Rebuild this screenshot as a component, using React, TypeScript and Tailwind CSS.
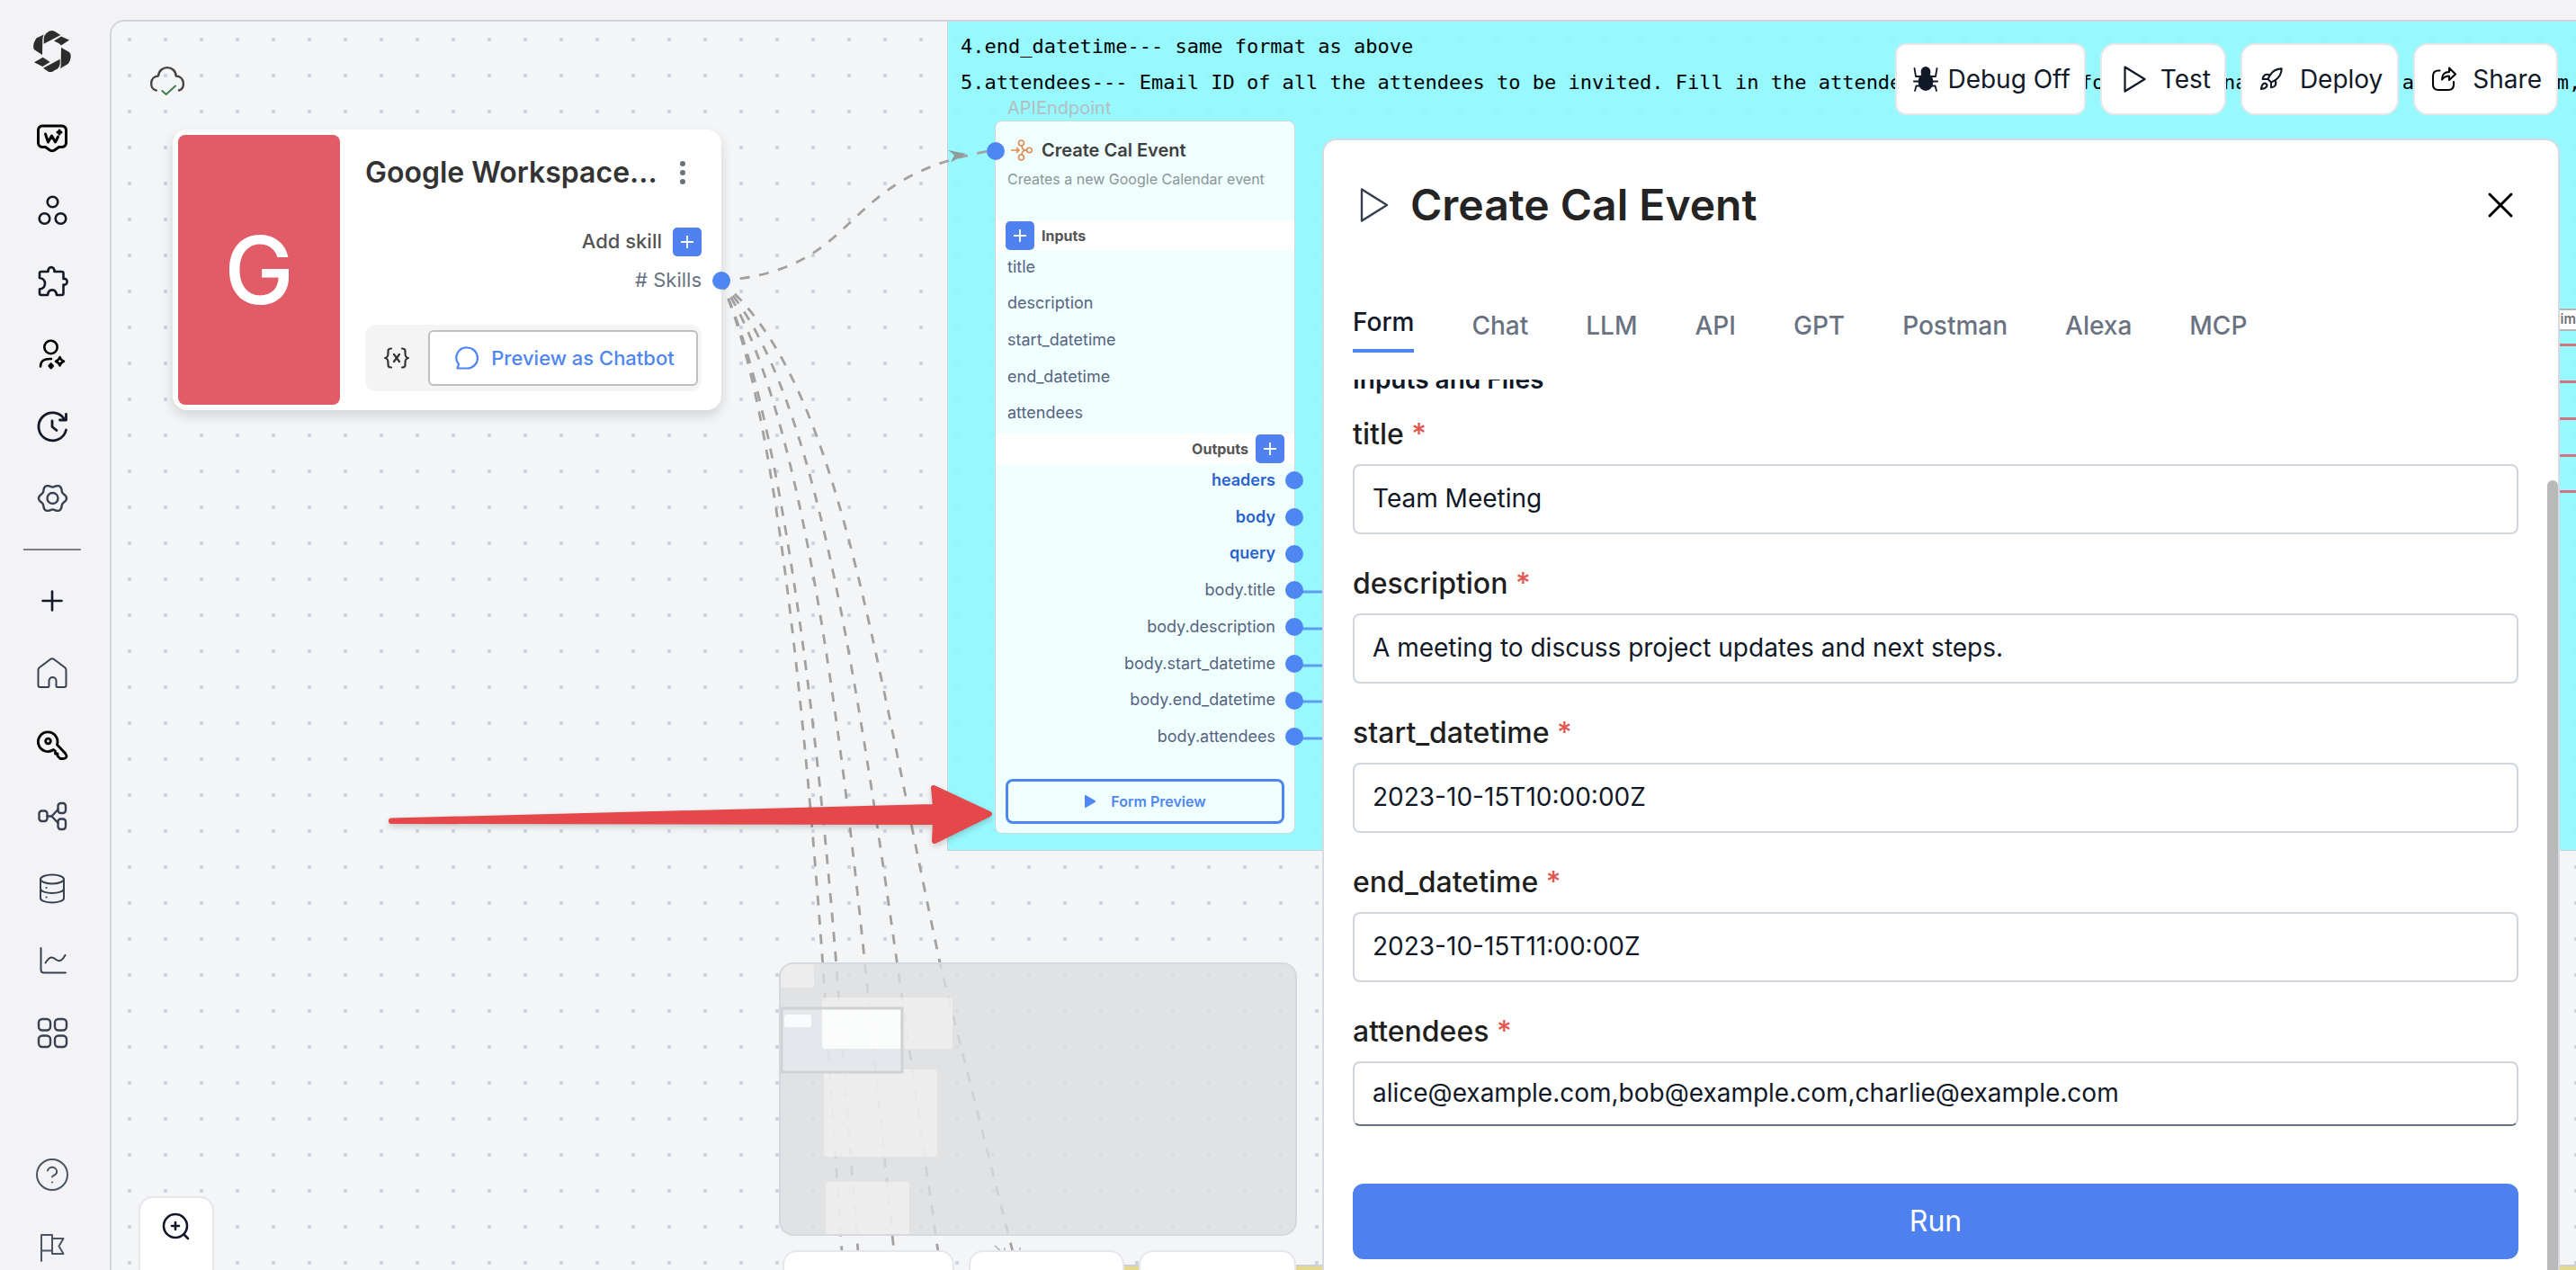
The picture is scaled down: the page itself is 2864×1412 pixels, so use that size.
import { useState } from 'react';
import type { ReactNode } from 'react';
import { Rocket, X } from 'lucide-react';

interface IconProps {
  color?: string;
  width?: number;
  children: ReactNode;
}

function Icon({ color = '#374151', width = 2, children }: IconProps) {
  return (
    <svg
      viewBox="0 0 40 40"
      className="size-10"
      fill="none"
      stroke={color}
      strokeWidth={width}
      strokeLinecap="round"
      strokeLinejoin="round"
      aria-hidden="true"
    >
      {children}
    </svg>
  );
}

// six-lobed gear outline
const gearPath =
  Array.from({ length: 72 }, (_, i) => {
    const a = (i * Math.PI) / 36;
    const r = 14 + 1.5 * Math.cos(6 * a);
    return `${i === 0 ? 'M' : 'L'}${(20.5 + r * Math.cos(a)).toFixed(2)} ${(20 + r * Math.sin(a)).toFixed(2)}`;
  }).join('') + 'Z';

const mainNav = [
  {
    label: 'Assistant',
    icon: (
      <Icon color="#000" width={3}>
        <path d="M9 6H31a4.500 4.500 0 0 1 4.500 4.500V25a4.500 4.500 0 0 1-4.500 4.500h-3.500l-5 3.500q-2.500 1.500-5 0l-5-3.500H9A4.500 4.500 0 0 1 4.500 25V10.500A4.500 4.500 0 0 1 9 6z" />
        <path d="M12.500 15l3 9 4-7 4 7 3-6" />
        <path d="M28 11v4M26 13h4" width={2} />
      </Icon>
    ),
  },
  {
    label: 'Teams',
    icon: (
      <Icon color="#111827" width={2.6}>
        <circle cx="20.500" cy="10.500" r="5.800" />
        <circle cx="11.500" cy="29" r="5.800" />
        <circle cx="29.500" cy="29" r="5.800" />
      </Icon>
    ),
  },
  {
    label: 'Plugins',
    icon: (
      <Icon color="#111827" width={2.6}>
        <path d="M8 8h7.500c-.5-6.500 7.500-6.500 7 0h8q2 0 2 2v6c5.500-1.500 5.500 8 0 6.500V32q0 2-2 2h-5.500c-1-7.500-9-7.500-10 0H8q-2 0-2-2v-4.500c8-.5 8-12 0-12.500V10q0-2 2-2z" />
      </Icon>
    ),
  },
  {
    label: 'Personas',
    icon: (
      <Icon color="#000" width={2.6}>
        <circle cx="18.500" cy="12" r="7.200" />
        <path d="M7 33.500c0-6 4-9 12-8.500" />
        <path d="M28.500 23q1 3.500 4.500 4.700-3.500 1.200-4.500 4.700-1-3.500-4.500-4.700 3.500-1.200 4.500-4.700z" />
        <path d="M18.700 30.500l2 2.300-2 2.300-2-2.300z" fill="#000" />
      </Icon>
    ),
  },
  {
    label: 'History',
    icon: (
      <Icon color="#111827" width={2.8}>
        <path d="M35.500 24a15.500 15.500 0 1 1-2-12" />
        <path d="M35.500 6.500v6.500h-7" />
        <path d="M20 14v6.500l5 4" />
      </Icon>
    ),
  },
  {
    label: 'Settings',
    icon: (
      <Icon width={2.4}>
        <path d={gearPath} />
        <circle cx="20.500" cy="20" r="6" />
      </Icon>
    ),
  },
];

const toolNav = [
  {
    label: 'Add',
    icon: (
      <Icon color="#111827" width={2.6}>
        <path d="M20 9.500v21M9.500 20h21" />
      </Icon>
    ),
  },
  {
    label: 'Home',
    icon: (
      <Icon>
        <path d="M4.500 34V17q0-2 1.500-3L18 5q2-1.300 4 0l12 9q1.500 1 1.500 3v17q0 2-2 2H26q-1.500 0-1.500-1.500V29a4 4 0 0 0-8 0v5.500Q16.500 36 15 36H6.500q-2 0-2-2z" />
      </Icon>
    ),
  },
  {
    label: 'Keys',
    icon: (
      <Icon color="#000" width={2.8}>
        <path d="M21.500 25.500a10.800 10.800 0 1 1 4-5.500l9 9.500q3.500 5-1.500 6h-4l-3-3v-2.500h-2.500V27z" />
        <circle cx="15.500" cy="16" r="2.800" />
      </Icon>
    ),
  },
  {
    label: 'Flows',
    icon: (
      <Icon width={2.4}>
        <rect x="5.500" y="13.500" width="9" height="11.500" rx="3" />
        <rect x="26.500" y="5" width="8.500" height="11" rx="3" />
        <rect x="26.500" y="22.500" width="8.500" height="11.500" rx="3" />
        <path d="M14.500 19.500h5l7-7.500M19.500 19.500l7 7.500" />
      </Icon>
    ),
  },
  {
    label: 'Database',
    icon: (
      <Icon>
        <ellipse cx="20" cy="9.500" rx="13" ry="5" />
        <path d="M7 9.500v21c0 6.500 26 6.500 26 0v-21M7 20c0 6.500 26 6.500 26 0" />
        <path d="M13.500 19h.1M13.500 29.500h.1" />
      </Icon>
    ),
  },
  {
    label: 'Analytics',
    icon: (
      <Icon>
        <path d="M7.500 6v24q0 3.500 3.500 3.500h24" />
        <path d="M12.500 22.500c5-8 8-7 12-3.500 4 3 7 .5 10-5" />
      </Icon>
    ),
  },
  {
    label: 'Apps',
    icon: (
      <Icon width={2.4}>
        <rect x="5" y="5" width="13" height="12.500" rx="4" />
        <rect x="23" y="5" width="13" height="12.500" rx="4" />
        <rect x="5" y="23.500" width="13" height="12.500" rx="4" />
        <rect x="23" y="23.500" width="13" height="12.500" rx="4" />
      </Icon>
    ),
  },
];

const footNav = [
  {
    label: 'Help',
    icon: (
      <Icon color="#4b5563">
        <circle cx="20" cy="20" r="17" />
        <path d="M15 15.500a5.200 5.200 0 0 1 10.200 1.500c0 3.500-5.200 4-5.200 5.500M20 28.500h.1" />
      </Icon>
    ),
  },
  {
    label: 'Report',
    icon: (
      <Icon color="#4b5563">
        <path d="M8 36V7h12v17.500H8M20 11h12.500l-5 8.500 5 8.500H20v-4" />
      </Icon>
    ),
  },
];

const tabs = ['Form', 'Chat', 'LLM', 'API', 'GPT', 'Postman', 'Alexa', 'MCP'];

const fields = [
  { name: 'title', value: 'Team Meeting' },
  { name: 'description', value: 'A meeting to discuss project updates and next steps.' },
  { name: 'start_datetime', value: '2023-10-15T10:00:00Z' },
  { name: 'end_datetime', value: '2023-10-15T11:00:00Z' },
];

const nodeInputs = ['title', 'description', 'start_datetime', 'end_datetime', 'attendees'];

const nodeOutputs = [
  { name: 'headers', root: true },
  { name: 'body', root: true },
  { name: 'query', root: true },
  { name: 'body.title', root: false },
  { name: 'body.description', root: false },
  { name: 'body.start_datetime', root: false },
  { name: 'body.end_datetime', root: false },
  { name: 'body.attendees', root: false },
];

function NavButton({ label, icon }: { label: string; icon: ReactNode }) {
  return (
    <button type="button" aria-label={label} className="flex h-20 w-full shrink-0 items-center justify-center pr-1.5">
      {icon}
    </button>
  );
}

function Sidebar() {
  return (
    <nav className="flex w-[122px] shrink-0 flex-col overflow-hidden pt-[34px]">
      <a href="/" aria-label="Dashboard" className="mb-[34px] flex shrink-0 justify-center pr-1.5">
        <svg viewBox="0 0 42 46" className="h-[46px] w-[42px]" fill="#2d2d2d">
          <path d="M10 27.100L.8 21Q-.5 17 .8 13.500 2 10 3.700 8.200L11.700 4.600Q10.300 7 10.300 10.100z" />
          <path d="M11.700 14.700V9.200Q12 5 14.700 2.700L18 .5Q21-.5 24 .9L30.300 5z" />
          <path d="M23 11.500L31 6.400 40 10.500 31 16.500 29 14.500z" />
          <path d="M31 18.800L40.300 24.300Q42 26 41.700 28.500 41.500 34 38 37.600L29.700 42.200Q31 40 30.700 37.200z" />
          <path d="M29.700 31.700V36.700Q29.500 40 27 42.200L20.700 46H17.300L11 41.800z" />
          <path d="M1 35.300L10.700 29.800 18.700 34.900 10.300 39.900z" />
        </svg>
      </a>
      {mainNav.map((item) => (
        <NavButton key={item.label} {...item} />
      ))}
      <hr className="my-4 ml-[26px] h-0.5 w-16 shrink-0 border-0 bg-[#7d7d82]" />
      {toolNav.map((item) => (
        <NavButton key={item.label} {...item} />
      ))}
      <div className="mt-[78px]">
        {footNav.map((item) => (
          <NavButton key={item.label} {...item} />
        ))}
      </div>
    </nav>
  );
}

function PlusButton({ label }: { label: string }) {
  return (
    <button
      type="button"
      aria-label={label}
      className="flex size-8 shrink-0 items-center justify-center rounded-[5px] bg-[#4f82ee]"
    >
      <svg viewBox="0 0 14 14" className="size-3.5" stroke="#fff" strokeWidth="1.800">
        <path d="M7 0v14M0 7h14" />
      </svg>
    </button>
  );
}

const edges = [
  'M801 312C852 420 888 700 915 1075L936 1392',
  'M801 312C854 420 900 700 930 1075L954 1392',
  'M801 312C876 420 924 700 962 1075L994 1392',
  'M801 312C900 420 945 700 998 1075L1043 1392',
  'M801 312C930 420 966 700 1046 1075L1126 1392',
  'M801 312C965 300 925 195 1106 167',
];

function Edges() {
  return (
    <svg className="absolute inset-0 size-full" fill="none" aria-hidden="true">
      <g transform="translate(-124 -24)">
        {edges.map((d) => (
          <path key={d} d={d} stroke="#a1a1a1" strokeWidth="2.800" strokeDasharray="11 10.700" />
        ))}
        <path d="M1054 167l20 4-17 9.500 4-8z" fill="#909a9c" />
        <path d="M1106 1385l9 8M1117 1387v4M1134 1387v4" stroke="#b0b0b0" strokeWidth="1.500" />
        {[657, 698, 739, 779, 820].map((y) => (
          <path key={y} d={`M1439 ${y + 1}H1480`} stroke="#5f9bf0" strokeWidth="3" />
        ))}
        {[383, 424, 465, 506, 546].map((y) => (
          <path key={y} d={`M2830 ${y}.500H2870`} stroke="#cf7480" strokeWidth="3" />
        ))}
      </g>
    </svg>
  );
}

function AgentCard() {
  return (
    <section className="absolute left-[68px] top-[120px] flex h-[312px] w-[610px] rounded-2xl bg-white p-1.5 shadow-[0_6px_14px_rgba(0,0,0,0.14)]">
      <div className="flex w-[180px] shrink-0 items-center justify-center rounded-lg bg-[#e15c67] text-[104px] font-medium text-white">
        G
      </div>
      <div className="flex grow flex-col pl-7 pr-4">
        <div className="flex h-[84px] items-center justify-between pr-[18px]">
          <h2 className="text-[32px] font-semibold text-[#333]">Google Workspace...</h2>
          <button type="button" aria-label="More" className="flex flex-col gap-1">
            <i className="size-1.5 rounded-full bg-gray-500" />
            <i className="size-1.5 rounded-full bg-gray-500" />
            <i className="size-1.5 rounded-full bg-gray-500" />
          </button>
        </div>
        <div className="mt-[18px] flex items-center justify-end gap-3 text-[22px] font-medium text-[#555]">
          Add skill
          <PlusButton label="Add skill" />
        </div>
        <p className="mt-2.5 text-right text-[22px] leading-8 text-gray-500"># Skills</p>
        <div className="mt-[34px] flex h-[74px] items-center rounded-xl bg-[#f4f4f4] py-1.5 pr-1">
          <button type="button" aria-label="Variables" className="flex grow justify-center">
            <svg
              viewBox="0 0 28 24"
              className="h-6 w-7"
              fill="none"
              stroke="#333"
              strokeWidth="2.200"
              strokeLinecap="round"
            >
              <path d="M8 1.500c-4 0-3.500 2-3.500 5 0 3.500-.5 4.500-3 5.500 2.500 1 3 2 3 5.500 0 3-.5 5 3.500 5M20 1.500c4 0 3.500 2 3.500 5 0 3.500.5 4.500 3 5.500-2.500 1-3 2-3 5.500 0 3 .5 5-3.500 5M11 8l6 8M17 8l-6 8" />
            </svg>
          </button>
          <button
            type="button"
            className="flex h-[62px] w-[300px] items-center justify-center gap-3.5 rounded-md border-2 border-[#bfbfbf] bg-white pl-1 text-[22px] font-medium text-[#4f85f0]"
          >
            <svg viewBox="0 0 26 26" className="size-[26px]" fill="none" stroke="currentColor" strokeWidth="2.200" strokeLinejoin="round">
              <path d="M13.500 1.500a11.300 11.300 0 1 1 0 23H2.500l1.500-4.500A11.300 11.300 0 0 1 13.500 1.500z" />
            </svg>
            Preview as Chatbot
          </button>
        </div>
      </div>
      <span className="absolute -right-2.5 top-[158px] size-5 rounded-full bg-[#4f87f2]" />
    </section>
  );
}

function ApiNode() {
  return (
    <section className="absolute left-[982px] top-[82px] w-[334px]">
      <p className="pl-3.5 text-[20px] leading-7 text-[#b4bec1]">APIEndpoint</p>
      <div className="relative flex h-[793px] flex-col rounded-lg border border-[#cfd8db] bg-[#f0ffff]">
        <div className="h-[110px] shrink-0 px-[13px] pt-[18px]">
          <h3 className="flex items-center gap-2.5 pl-1 text-[20px] font-semibold leading-7 text-[#404040]">
            <svg viewBox="0 0 24 24" className="size-6" fill="none" stroke="#e08a4e" strokeWidth="1.600">
              <circle cx="11.500" cy="4" r="3" />
              <circle cx="11.500" cy="20" r="3" />
              <circle cx="20.500" cy="12" r="2.800" />
              <path d="M0 12h9M6 9l3 3-3 3M12 7c0 3 1.500 5 5.500 5M12 17c0-3 1.500-5 5.500-5" />
            </svg>
            Create Cal Event
          </h3>
          <p className="mt-1.5 text-[16px] leading-6 text-[#8a9596]">Creates a new Google Calendar event</p>
        </div>
        <div className="flex h-[34px] shrink-0 items-center gap-2 bg-white pl-[11px] text-[16px] font-bold text-[#555]">
          <PlusButton label="Add input" />
          Inputs
        </div>
        <ul className="flex h-[203px] shrink-0 flex-col pl-[13px] text-[18px] text-[#566380]">
          {nodeInputs.map((name) => (
            <li key={name} className="flex flex-1 items-center pb-1.5">
              {name}
            </li>
          ))}
        </ul>
        <div className="flex h-[34px] shrink-0 items-center justify-end gap-2 bg-white pr-[11px] text-[16px] font-bold text-[#555]">
          Outputs
          <PlusButton label="Add output" />
        </div>
        <ul className="flex h-[326px] shrink-0 flex-col text-[18px]">
          {nodeOutputs.map(({ name, root }) => (
            <li
              key={name}
              className={
                root
                  ? 'relative flex flex-1 items-center justify-end pb-1.5 pr-[21px] font-semibold text-[#2b62d0]'
                  : 'relative flex flex-1 items-center justify-end pb-1.5 pr-[21px] text-[#566380]'
              }
            >
              {name}
              <span className="absolute -right-2.5 top-2 size-5 rounded-full bg-[#4f87f2]" />
            </li>
          ))}
        </ul>
        <button
          type="button"
          className="mx-[11px] mt-6 flex h-[50px] shrink-0 items-center justify-center gap-4 rounded-lg border-[3px] border-[#4f87f2] text-[16px] font-semibold text-[#4f87f2]"
        >
          <svg viewBox="0 0 14 16" className="h-4 w-3.5" fill="currentColor">
            <path d="M1 2q0-1.500 1.500-.8L12.500 7q1.200 1 0 2L2.500 14.800Q1 15.500 1 14z" />
          </svg>
          Form Preview
        </button>
        <span className="absolute -left-2.5 top-[23px] size-5 rounded-full bg-[#4f87f2]" />
      </div>
    </section>
  );
}

function MiniMap() {
  return (
    <div className="absolute left-[742px] top-[1046px] h-[304px] w-[576px] overflow-hidden rounded-2xl border-2 border-[#d5d8e0] bg-[#dcddde]/80">
      <svg viewBox="0 0 572 300" className="size-full" aria-hidden="true">
        <g fill="#f2f2f1" opacity="0.7">
          <rect x="0" y="0" width="37" height="26" rx="4" />
          <rect x="46" y="37" width="145" height="57" rx="4" />
          <rect x="48" y="117" width="126" height="97" rx="4" />
          <rect x="50" y="242" width="93" height="60" rx="4" />
        </g>
        <rect x="1" y="49" width="134" height="71" fill="#e6e9ee" opacity="0.7" />
        <g fill="#fff" opacity="0.85">
          <rect x="4" y="56" width="30" height="14" rx="3" />
          <path d="M46 50h87v44H50q-4 0-4-4z" />
        </g>
        <rect x="1" y="49" width="134" height="71" fill="none" stroke="#d0d1d2" strokeWidth="3" />
      </svg>
    </div>
  );
}

function RedArrow() {
  return (
    <svg
      viewBox="0 0 680 72"
      className="absolute left-[304px] top-[846px] h-[72px] w-[680px] drop-shadow-[0_3px_3px_rgba(0,0,0,0.18)]"
      fill="#e5484a"
      stroke="#e5484a"
      strokeWidth="6"
      strokeLinejoin="round"
      aria-hidden="true"
    >
      <path d="M7 42.500L612 27 610 6 672 35 611 65 612 44 7 43z" />
    </svg>
  );
}

function Toolbar() {
  return (
    <div className="absolute right-5 top-6 flex h-20 gap-4 text-[28px] text-[#111827]">
      <button type="button" className="flex items-center gap-2.5 rounded-xl border-2 border-gray-200 bg-white pl-[18px] pr-[15px]">
        <svg viewBox="0 0 28 28" className="size-7" fill="#111827" stroke="#111827" strokeWidth="1.800" strokeLinecap="round" strokeLinejoin="round">
          <ellipse cx="14" cy="17" rx="7.500" ry="9" />
          <ellipse cx="14" cy="6" rx="4.500" ry="5" />
          <path d="M7.500 11H3L1.500 2M20.500 11H25L26.500 2M7 16.500H.9M21 16.500h6.100M8 21.500H3.500L2 27M20 21.500h4.500L26 27" fill="none" />
        </svg>
        Debug Off
      </button>
      <button type="button" className="flex items-center gap-4 rounded-2xl border-2 border-gray-200 bg-white pl-6 pr-[15px]">
        <svg viewBox="0 0 25 30" className="h-[30px] w-[25px]" fill="none" stroke="#111827" strokeWidth="2.200" strokeLinejoin="round">
          <path d="M1.500 1.500L23.500 15 1.500 28.500z" />
        </svg>
        Test
      </button>
      <button type="button" className="flex items-center gap-[18px] rounded-2xl border-2 border-gray-200 bg-white pl-[18px] pr-4">
        <Rocket size={28} strokeWidth={1.8} />
        Deploy
      </button>
      <button type="button" className="flex items-center gap-[18px] rounded-2xl border-2 border-gray-200 bg-white pl-[18px] pr-4">
        <svg viewBox="0 0 28 28" className="size-7" fill="none" stroke="#000" strokeWidth="2.100" strokeLinecap="round" strokeLinejoin="round">
          <path d="M9.500 4.500H8q-6 0-6 6V20q0 6 6 6h11q6 0 6-6v-3" />
          <path d="M12 14.500q0-8.500 8-8.500V1.500L27 8.500l-7 6.500v-4.500q-5 0-8 4z" />
        </svg>
        Share
      </button>
    </div>
  );
}

function PreviewPanel() {
  const [activeTab, setActiveTab] = useState('Form');

  return (
    <aside className="absolute bottom-0 right-[18px] top-[130px] flex w-[1376px] max-w-full flex-col overflow-hidden rounded-t-2xl border-2 border-b-0 border-[#d8dae2] bg-white">
      <header className="flex h-36 shrink-0 items-center px-10">
        <svg viewBox="0 0 32 38" className="h-[38px] w-8" fill="none" stroke="#374151" strokeWidth="2.400" strokeLinejoin="round">
          <path d="M2 1.500L30 19 2 36.500z" />
        </svg>
        <h1 className="ml-6 grow text-[48px] font-semibold text-[#242424]">Create Cal Event</h1>
        <button type="button" aria-label="Close">
          <X className="size-12 text-black" strokeWidth={1.5} />
        </button>
      </header>
      <div role="tablist" className="mt-9 flex shrink-0 gap-16 pl-8 text-[28px] font-medium leading-9">
        {tabs.map((tab) => (
          <button
            key={tab}
            type="button"
            role="tab"
            aria-selected={activeTab === tab}
            onClick={() => setActiveTab(tab)}
            className={
              activeTab === tab
                ? 'border-b-4 border-[#4f85f0] pb-3 pt-1 text-[#111827]'
                : 'pb-2.5 pt-1.5 text-gray-500'
            }
          >
            {tab}
          </button>
        ))}
      </div>
      <div className="relative mt-[30px] grow overflow-hidden pl-8 pr-11">
        <form onSubmit={(e) => e.preventDefault()}>
          <h2 className="-mt-[18px] mb-[22px] text-[28px] font-semibold leading-9 text-[#111827]">Inputs and Files</h2>
          <div className="space-y-[34px]">
            {fields.map((field) => (
              <div key={field.name}>
                <label htmlFor={field.name} className="block pb-3 text-[32px] font-medium leading-[42px] text-[#1f1f1f]">
                  {field.name} <span className="text-[#e0584f]">*</span>
                </label>
                <input
                  id={field.name}
                  defaultValue={field.value}
                  className="block h-[78px] w-full rounded-lg border-2 border-gray-300 px-5 pb-0.5 text-[28px] text-[#111827] outline-none"
                />
              </div>
            ))}
            <div>
              <label htmlFor="attendees" className="block pb-3 text-[32px] font-medium leading-[42px] text-[#1f1f1f]">
                attendees <span className="text-[#e0584f]">*</span>
              </label>
              <textarea
                id="attendees"
                rows={1}
                defaultValue="alice@example.com,bob@example.com,charlie@example.com"
                className="block h-[72px] w-full resize-none overflow-hidden rounded-lg border-2 border-gray-300 border-b-gray-500 px-5 py-[15px] text-[28px] leading-9 text-[#111827] outline-none"
              />
            </div>
          </div>
          <button type="submit" className="mt-16 h-[84px] w-full rounded-xl bg-[#4f81ee] text-[32px] text-white">
            Run
          </button>
        </form>
        <div className="absolute bottom-0 right-0 top-[112px] w-3 rounded-t-full bg-[#b9b9b9]" />
      </div>
    </aside>
  );
}

export default function App() {
  return (
    <div className="flex h-screen overflow-hidden bg-[#f3f3f6] font-['Inter',sans-serif]">
      <Sidebar />
      <main className="relative mt-[22px] grow overflow-hidden rounded-tl-2xl border-l-2 border-t-2 border-[#d1d5db] bg-[#f3f5f7] bg-[radial-gradient(circle,#cbd5e1_2px,transparent_2.5px)] bg-[size:40px_40px]">
        <div className="absolute left-[929px] right-0 top-0 h-[922px] overflow-hidden whitespace-pre border-b border-l border-[#c3d3d8] bg-[#8df8fe]/90 pl-3.5 pt-2 font-['DejaVu_Sans_Mono',monospace] text-[22px] leading-10 text-black">
          <p>4.end_datetime--- same format as above</p>
          <p>
            5.attendees--- Email ID of all the attendees to be invited. Fill in the attendees as per this format like
            {' name@gmail.com,abcd@gmail.com,'}
          </p>
        </div>
        <div className="absolute bottom-0 left-[960px] right-0 h-1.5 border-t-2 border-[#d0d0d0] bg-[#e5d88f]" />
        <div className="absolute right-0 top-[319px] h-[25px] w-6 border-y-2 border-[#b5b5b5] bg-white text-right text-[15px] font-semibold leading-[19px] text-[#6f6f6f]">
          im
        </div>
        <Edges />
        <svg viewBox="0 0 40 40" className="absolute left-[42px] top-[46px] size-10" fill="none" strokeWidth="2.400" strokeLinecap="round" strokeLinejoin="round">
          <path
            d="M7.700 30.500C-.5 29 .5 14.500 10 14.500 11 2 29 2 29.700 14.500 39.500 14.500 40.500 29 33 30.500"
            stroke="#444"
          />
          <path d="M14.300 31l4.400 4L29 25.500" stroke="#3f7d50" strokeWidth="2" />
        </svg>
        <AgentCard />
        <ApiNode />
        <RedArrow />
        <MiniMap />
        <div className="absolute bottom-0 left-[746px] flex h-[22px] gap-4">
          <div className="w-[191px] rounded-t-2xl border-2 border-b-0 border-gray-200 bg-white" />
          <div className="w-[173px] rounded-t-2xl border-2 border-b-0 border-gray-200 bg-white" />
          <div className="w-[175px] rounded-t-2xl border-2 border-b-0 border-gray-200 bg-white" />
        </div>
        <button
          type="button"
          aria-label="Zoom in"
          className="absolute bottom-0 left-[30px] flex h-[82px] w-[84px] justify-center rounded-t-2xl border-2 border-b-0 border-gray-200 bg-white pt-4"
        >
          <svg viewBox="0 0 32 32" className="size-8" fill="none" stroke="#111827" strokeWidth="2.600" strokeLinecap="round">
            <circle cx="15" cy="15" r="13" />
            <path d="M24.500 24.500L29 29M15 11v8M11 15h8" />
          </svg>
        </button>
        <PreviewPanel />
        <Toolbar />
      </main>
    </div>
  );
}
